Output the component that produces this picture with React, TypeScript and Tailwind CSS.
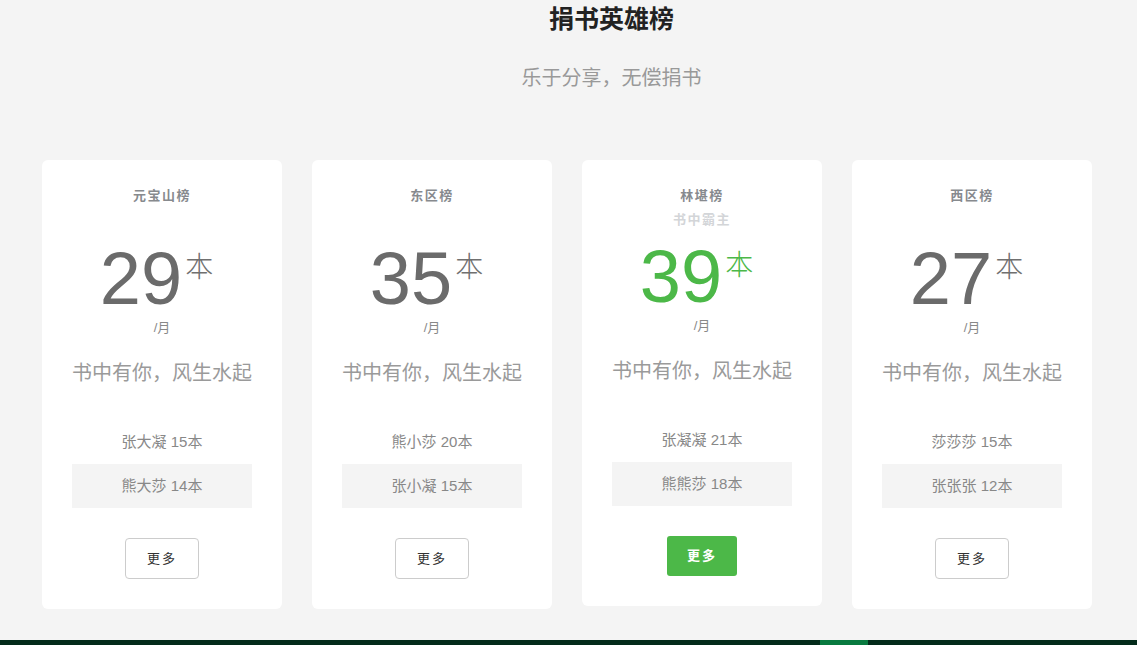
import React from "react";

type CardData = {
  title: string;
  sub?: string;
  num: string;
  first: string;
  second: string;
  featured?: boolean;
};

const cards: CardData[] = [
  { title: "元宝山榜", num: "29", first: "张大凝 15本", second: "熊大莎 14本" },
  { title: "东区榜", num: "35", first: "熊小莎 20本", second: "张小凝 15本" },
  { title: "林堪榜", sub: "书中霸主", num: "39", first: "张凝凝 21本", second: "熊熊莎 18本", featured: true },
  { title: "西区榜", num: "27", first: "莎莎莎 15本", second: "张张张 12本" },
];

const font = { fontFamily: '"Liberation Sans", "Noto Sans CJK SC", sans-serif' };

function Card({ c }: { c: CardData }) {
  return (
    <div className="w-[240px] bg-white rounded-[6px] pt-[26px] pb-[30px] flex flex-col items-center">
      <div className="text-[13px] font-bold tracking-[1.5px] text-[#878a8e] leading-[20px]">{c.title}</div>
      {c.sub && (
        <div className="text-[13px] font-bold tracking-[1.5px] text-[#d3d5d8] leading-[20px] mt-[4px]">{c.sub}</div>
      )}
      <div className={`flex items-start pr-[11px] ${c.sub ? "mt-[10px]" : "mt-[36px]"}`}>
        <span className={`text-[74px] leading-[74px] ${c.featured ? "text-[#4cb848]" : "text-[#6b6b6b]"}`}>{c.num}</span>
        <span className={`text-[28px] leading-[28px] mt-[12px] ml-[3px] font-light ${c.featured ? "text-[#4cb848]" : "text-[#707070]"}`}>本</span>
      </div>
      <div className="text-[13px] leading-[16px] text-[#888] mt-[4px]">/月</div>
      <div className="text-[20px] leading-[28px] text-[#9a9a9a] mt-[23px]">书中有你，风生水起</div>
      <div className="text-[15px] leading-[20px] text-[#888] mt-[45px]">{c.first}</div>
      <div className="w-[180px] h-[44px] bg-[#f4f4f4] mt-[12px] flex items-center justify-center text-[15px] text-[#888]">
        {c.second}
      </div>
      {c.featured ? (
        <div className="mt-[30px] w-[70px] h-[40px] rounded-[3px] bg-[#4cb848] text-white text-[13px] font-bold tracking-[2px] flex items-center justify-center">
          更多
        </div>
      ) : (
        <div className="mt-[30px] w-[74px] h-[41px] rounded-[4px] border border-[#cccccc] text-[#333] text-[13px] tracking-[2px] flex items-center justify-center">
          更多
        </div>
      )}
    </div>
  );
}

export default function App() {
  return (
    <div className="w-[1137px] h-[645px] bg-[#f4f4f4] overflow-hidden flex flex-col" style={font}>
      <div className="h-[2px] bg-[#b8b8b8]" />
      <div className="pl-[86px] flex flex-col items-center mt-[3px]">
        <div className="text-[25px] leading-[32px] font-bold text-[#222]">捐书英雄榜</div>
        <div className="text-[20px] leading-[24px] text-[#999] mt-[31px]">乐于分享，无偿捐书</div>
      </div>
      <div className="flex items-start gap-[30px] pl-[42px] mt-[70px]">
        {cards.map((c) => (
          <Card key={c.title} c={c} />
        ))}
      </div>
      <div className="mt-[31px] h-[40px] flex bg-[#032b1a] shrink-0">
        <div className="w-[820px]" />
        <div className="w-[48px] bg-[#087a3f]" />
      </div>
    </div>
  );
}
